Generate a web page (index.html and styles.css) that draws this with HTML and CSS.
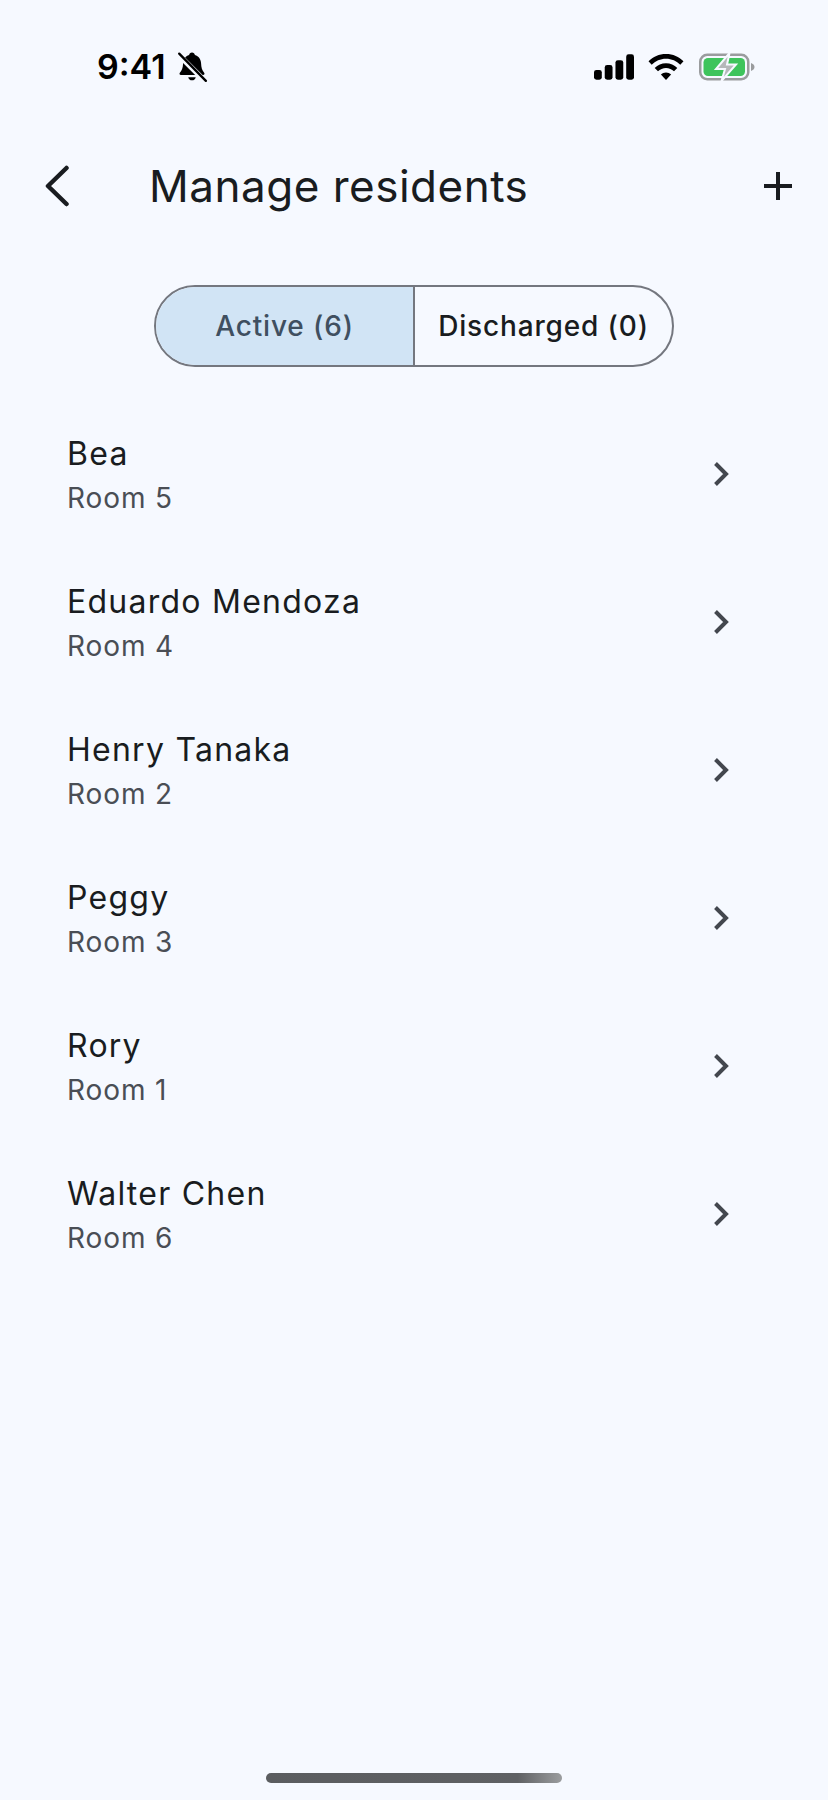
FILE: index.html
```html
<!DOCTYPE html>
<html lang="en">
<head>
<meta charset="utf-8">
<title>Manage residents</title>
<link rel="stylesheet" href="styles.css">
</head>
<body>
<div class="screen">
  <header class="status">
    <div class="status-left">
      <span class="time">9:41</span>
      <svg class="bell" width="32" height="32" viewBox="0 0 30 30"><path d="M15 1.500c1.500 0 2.500 1 2.700 2.300 3.600 1 5.600 4 5.800 7.800.2 4 .9 6.500 2.900 8.900.7.900.2 2-1 2H4.600c-1.200 0-1.700-1.100-1-2 1.900-2.300 2.800-4.700 3-8.300.2-3.900 2-7.400 5.700-8.400C12.500 2.500 13.500 1.500 15 1.500z" fill="#000"/><path d="M11.500 24.500h7c-.3 1.800-1.700 3-3.500 3s-3.200-1.200-3.500-3z" fill="#000"/><path d="M3 4 26.500 27.500" stroke="#f6f9ff" stroke-width="5"/><path d="M3 2.500 28 28" stroke="#000" stroke-width="2.200" stroke-linecap="round"/></svg>
    </div>
    <div class="status-right">
      <svg class="signal" width="40" height="26" viewBox="0 0 41 26"><rect x="0" y="16" width="8" height="10" rx="2.500"/><rect x="11" y="11" width="8" height="15" rx="2.500"/><rect x="22" y="6" width="8" height="20" rx="2.500"/><rect x="33" y="0" width="8" height="26" rx="2.500"/></svg>
      <svg class="wifi" width="36" height="26" viewBox="0 0 36 26"><path d="M18 0c7 0 13 2.700 17.500 7.300l-3.200 3.400C28.600 7 23.600 4.700 18 4.700S7.400 7 3.700 10.700L.5 7.300C5 2.700 11 0 18 0z"/><path d="M18 9.300c4.400 0 8.300 1.700 11.300 4.600l-3.300 3.400c-2.100-2-4.900-3.300-8-3.300s-5.900 1.300-8 3.300l-3.300-3.400c3-2.900 6.900-4.600 11.300-4.600z"/><path d="M18 18.500c2 0 3.800.8 5.100 2L18 26l-5.100-5.500c1.300-1.200 3.100-2 5.100-2z"/></svg>
      <svg class="battery" width="56" height="28" viewBox="0 0 56 28"><rect x="1.250" y="1.750" width="48" height="24.500" rx="7" fill="none" stroke="#9a9c9e" stroke-width="2.500"/><rect x="4.500" y="5" width="41.500" height="18" rx="4.500" fill="#3ec45c"/><path d="M52 10c2 .7 3.500 2 3.500 4s-1.500 3.300-3.500 4z" fill="#9a9c9e"/><path d="M30.500 0 17 16h9l-3.500 12L37 11.500h-9z" fill="#b5b8ba" stroke="#f6f9ff" stroke-width="2"/></svg>
    </div>
  </header>

  <nav class="appbar">
    <button class="icon-btn back" aria-label="Back">
      <svg width="26" height="42" viewBox="0 0 26 42"><path d="M22.500 3 4 21l18.500 18" fill="none" stroke="#191c20" stroke-width="4.500" stroke-linecap="round" stroke-linejoin="round"/></svg>
    </button>
    <h1 class="title">Manage residents</h1>
    <button class="icon-btn add" aria-label="Add">
      <svg width="30" height="30" viewBox="0 0 30 30"><path d="M15 1v28M1 15h28" fill="none" stroke="#191c20" stroke-width="4"/></svg>
    </button>
  </nav>

  <div class="segments">
    <div class="segment selected">Active (6)</div>
    <div class="segment">Discharged (0)</div>
  </div>

  <ul class="list">
    <li class="row"><div class="info"><div class="name">Bea</div><div class="room">Room 5</div></div><svg class="chev" width="16" height="26" viewBox="0 0 16 26"><path d="M2.500 2.500 13 13 2.500 23.500" fill="none" stroke="#43474e" stroke-width="4"/></svg></li>
    <li class="row"><div class="info"><div class="name">Eduardo Mendoza</div><div class="room">Room 4</div></div><svg class="chev" width="16" height="26" viewBox="0 0 16 26"><path d="M2.500 2.500 13 13 2.500 23.500" fill="none" stroke="#43474e" stroke-width="4"/></svg></li>
    <li class="row"><div class="info"><div class="name">Henry Tanaka</div><div class="room">Room 2</div></div><svg class="chev" width="16" height="26" viewBox="0 0 16 26"><path d="M2.500 2.500 13 13 2.500 23.500" fill="none" stroke="#43474e" stroke-width="4"/></svg></li>
    <li class="row"><div class="info"><div class="name">Peggy</div><div class="room">Room 3</div></div><svg class="chev" width="16" height="26" viewBox="0 0 16 26"><path d="M2.500 2.500 13 13 2.500 23.500" fill="none" stroke="#43474e" stroke-width="4"/></svg></li>
    <li class="row"><div class="info"><div class="name">Rory</div><div class="room">Room 1</div></div><svg class="chev" width="16" height="26" viewBox="0 0 16 26"><path d="M2.500 2.500 13 13 2.500 23.500" fill="none" stroke="#43474e" stroke-width="4"/></svg></li>
    <li class="row"><div class="info"><div class="name">Walter Chen</div><div class="room">Room 6</div></div><svg class="chev" width="16" height="26" viewBox="0 0 16 26"><path d="M2.500 2.500 13 13 2.500 23.500" fill="none" stroke="#43474e" stroke-width="4"/></svg></li>
  </ul>

  <div class="home-bar"></div>
</div>
</body>
</html>
```

FILE: styles.css
```css
* { box-sizing: border-box; }
html, body { margin: 0; padding: 0; }
body {
  background: #f6f9ff;
  font-family: Inter, "Liberation Sans", sans-serif;
  color: #191c20;
}
.screen {
  width: 828px;
  height: 1800px;
  display: flex;
  flex-direction: column;
  position: relative;
  overflow: hidden;
}
.status {
  height: 133px;
  padding: 1px 73px 0 97px;
  display: flex;
  justify-content: space-between;
  align-items: center;
}
.status-left { display: flex; align-items: center; gap: 10px; }
.time {
  font-size: 34px;
  font-weight: 600;
  color: #000;
  line-height: 1;
}
.status-right { display: flex; align-items: center; gap: 15px; }
.signal { margin-right: -1px; }
.appbar {
  height: 106px;
  display: flex;
  align-items: center;
  padding: 0 35px 0 44px;
}
.icon-btn {
  border: 0;
  padding: 0;
  background: none;
  display: flex;
}
.title {
  margin: 0 0 0 79px;
  flex: 1;
  font-size: 44px;
  font-weight: 400;
  line-height: 56px;
  letter-spacing: 0.5px;
}
.segments {
  margin: 46px auto 0;
  width: 520px;
  height: 82px;
  display: flex;
  border: 2px solid #74777f;
  border-radius: 41px;
  overflow: hidden;
}
.segment {
  flex: 1;
  display: flex;
  align-items: center;
  justify-content: center;
  font-size: 28px;
  font-weight: 500;
  letter-spacing: 0.85px;
}
.segment.selected {
  flex: none;
  width: 259px;
  background: #d1e4f5;
  color: #3f4f60;
  border-right: 2px solid #74777f;
}
.list {
  list-style: none;
  margin: 35px 0 0;
  padding: 0;
}
.row {
  height: 148px;
  padding: 0 99px 0 67px;
  display: flex;
  align-items: center;
  justify-content: space-between;
}
.chev { margin-bottom: 4px; }
.name {
  font-size: 32px;
  line-height: 44px;
  letter-spacing: 1.25px;
}
.room {
  font-size: 28px;
  line-height: 44px;
  letter-spacing: 0.9px;
  color: #4a4e55;
}
.home-bar {
  position: absolute;
  left: 266px;
  top: 1773px;
  width: 296px;
  height: 10px;
  border-radius: 5px;
  background: linear-gradient(90deg, #5b5d60 0%, #5f6164 85%, #9b9d9f 100%);
}
```
